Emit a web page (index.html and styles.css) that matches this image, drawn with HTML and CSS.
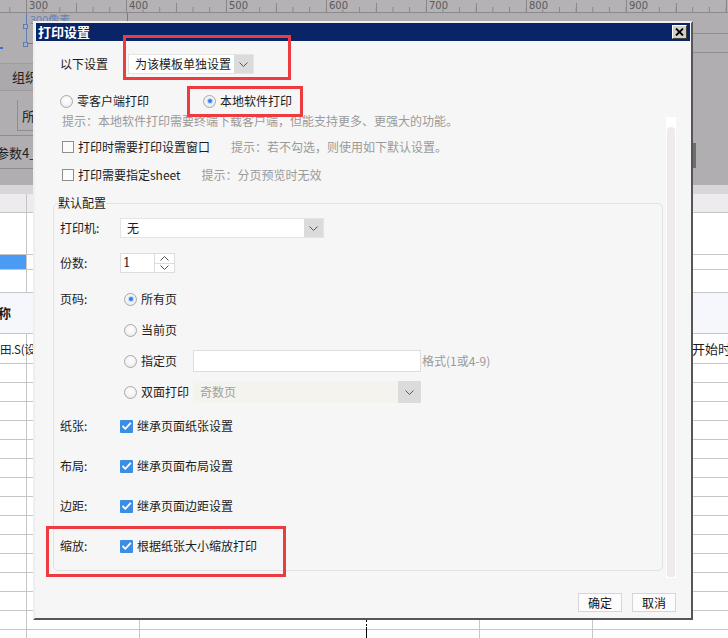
FILE: index.html
```html
<!DOCTYPE html>
<html lang="zh-CN">
<head>
<meta charset="utf-8">
<title>打印设置</title>
<link rel="stylesheet" href="styles.css">
</head>
<body>
<div class="app">
  <div class="ruler">
    <span>300</span><span>400</span><span>500</span><span>600</span><span>700</span><span>800</span><span>900</span>
  </div>
  <div class="toolbar">
    <div class="tb-left">
      <div class="selbox"><span class="selbox-text">300像素</span><i class="handle h1"></i><i class="handle h2"></i></div>
      <i class="blue-tick"></i>
      <div class="btn-org">组织</div>
      <div class="cell-suo">所</div>
      <div class="cell-param">参数4_扌</div>
    </div>
    <div class="tb-right">
      <div class="tbr-a"></div>
      <div class="tbr-b"></div>
      <i class="scroll-mark"></i>
    </div>
  </div>
  <div class="band"></div>
  <div class="thead"></div>
  <div class="tbody">
    <div class="row h42"></div>
    <div class="row h15"><span class="sel-cell"></span></div>
    <div class="row h23"></div>
    <div class="row h41 alt"><span class="t-name">称</span></div>
    <div class="row h30"><span class="t-left">田.S(设</span><span class="t-right">开始时</span></div>
    <div class="row h19"></div><div class="row h19"></div><div class="row h19"></div>
    <div class="row h19"></div><div class="row h19"></div><div class="row h19"></div>
    <div class="row h19"></div><div class="row h19"></div><div class="row h19"></div>
    <div class="row h19"></div><div class="row h19"></div><div class="row h19"></div>
    <div class="row h19"></div><div class="row h19"></div><div class="row h19"></div>
  </div>
  <i class="cursor"></i>

  <div class="dialog">
    <div class="titlebar">
      <span class="title">打印设置</span>
      <button class="close" type="button"><svg width="9" height="8" viewBox="0 0 9 8"><path d="M1 0.5 L8 7.5 M8 0.5 L1 7.5" stroke="#000" stroke-width="1.8" fill="none"/></svg></button>
    </div>
    <div class="dbody">
      <div class="main">
        <div class="content">
          <div class="row-set">
            <span class="lbl-set">以下设置</span>
            <div class="select sel-mode"><span class="sel-text">为该模板单独设置</span><span class="arrow"><svg width="9" height="5" viewBox="0 0 9 5"><polyline points="0.5,0.5 4.5,4.5 8.5,0.5" fill="none" stroke="#555" stroke-width="1"/></svg></span></div>
          </div>
          <div class="row-radio">
            <span class="opt opt1"><i class="radio"></i><span class="opt-text">零客户端打印</span></span>
            <span class="opt"><i class="radio on"></i><span class="opt-text">本地软件打印</span></span>
          </div>
          <div class="hint hint-main">提示：本地软件打印需要终端下载客户端，但能支持更多、更强大的功能。</div>
          <div class="row-check">
            <i class="check"></i><span class="chk-text">打印时需要打印设置窗口</span><span class="hint hint-side">提示：若不勾选，则使用如下默认设置。</span>
          </div>
          <div class="row-check">
            <i class="check"></i><span class="chk-text">打印需要指定sheet</span><span class="hint hint-side">提示：分页预览时无效</span>
          </div>
          <fieldset class="defaults">
            <legend>默认配置</legend>
            <div class="frow f-printer">
              <span class="flbl">打印机:</span>
              <div class="select sel-printer"><span class="sel-text">无</span><span class="arrow"><svg width="9" height="5" viewBox="0 0 9 5"><polyline points="0.5,0.5 4.5,4.5 8.5,0.5" fill="none" stroke="#555" stroke-width="1"/></svg></span></div>
            </div>
            <div class="frow f-copies">
              <span class="flbl">份数:</span>
              <div class="spin">
                <div class="spin-input">1</div>
                <div class="spin-btns">
                  <span><svg width="9" height="5" viewBox="0 0 9 5"><polyline points="0.5,4.5 4.5,0.5 8.5,4.5" fill="none" stroke="#555" stroke-width="1"/></svg></span>
                  <span><svg width="9" height="5" viewBox="0 0 9 5"><polyline points="0.5,0.5 4.5,4.5 8.5,0.5" fill="none" stroke="#555" stroke-width="1"/></svg></span>
                </div>
              </div>
            </div>
            <div class="frow f-all">
              <span class="flbl">页码:</span>
              <i class="radio on r-in"></i><span class="opt-text">所有页</span>
            </div>
            <div class="frow f-cur">
              <span class="flbl"></span>
              <i class="radio r-in"></i><span class="opt-text">当前页</span>
            </div>
            <div class="frow tall f-spec">
              <span class="flbl"></span>
              <span class="ropt"><i class="radio r-in"></i><span class="opt-text">指定页</span></span>
              <div class="text-input"></div>
              <span class="hint fmt">格式(1或4-9)</span>
            </div>
            <div class="frow tall f-dup">
              <span class="flbl"></span>
              <span class="ropt"><i class="radio r-in"></i><span class="opt-text">双面打印</span></span>
              <div class="select sel-dup"><span class="sel-text">奇数页</span><span class="arrow"><svg width="9" height="5" viewBox="0 0 9 5"><polyline points="0.5,0.5 4.5,4.5 8.5,0.5" fill="none" stroke="#555" stroke-width="1"/></svg></span></div>
            </div>
            <div class="frow f-paper">
              <span class="flbl">纸张:</span>
              <i class="check on"><svg width="11" height="10" viewBox="0 0 11 10"><polyline points="1.5,5 4.3,7.8 9.8,1.8" fill="none" stroke="#fff" stroke-width="1.8"/></svg></i><span class="chk-text">继承页面纸张设置</span>
            </div>
            <div class="frow f-next">
              <span class="flbl">布局:</span>
              <i class="check on"><svg width="11" height="10" viewBox="0 0 11 10"><polyline points="1.5,5 4.3,7.8 9.8,1.8" fill="none" stroke="#fff" stroke-width="1.8"/></svg></i><span class="chk-text">继承页面布局设置</span>
            </div>
            <div class="frow f-next">
              <span class="flbl">边距:</span>
              <i class="check on"><svg width="11" height="10" viewBox="0 0 11 10"><polyline points="1.5,5 4.3,7.8 9.8,1.8" fill="none" stroke="#fff" stroke-width="1.8"/></svg></i><span class="chk-text">继承页面边距设置</span>
            </div>
            <div class="frow f-next">
              <span class="flbl">缩放:</span>
              <i class="check on"><svg width="11" height="10" viewBox="0 0 11 10"><polyline points="1.5,5 4.3,7.8 9.8,1.8" fill="none" stroke="#fff" stroke-width="1.8"/></svg></i><span class="chk-text">根据纸张大小缩放打印</span>
            </div>
          </fieldset>
        </div>
        <div class="scrollbar"><div class="thumb"></div></div>
      </div>
      <div class="footer">
        <button class="btn" type="button">确定</button>
        <button class="btn" type="button">取消</button>
      </div>
    </div>
  </div>

  <i class="mark mark-a"></i>
  <i class="mark mark-b"></i>
  <i class="mark mark-c"></i>
</div>
</body>
</html>
```

FILE: styles.css
```css
* { box-sizing: border-box; }
html, body { margin: 0; padding: 0; }
body {
  width: 728px;
  height: 638px;
  overflow: hidden;
  font-family: "Noto Sans CJK SC", "Noto Sans", sans-serif;
  font-size: 12px;
  color: #1c1c1c;
  background: #fff;
}
i { font-style: normal; }

.app {
  position: relative;
  width: 728px;
  height: 638px;
  overflow: hidden;
  background: #fff;
}

/* ---------- background application ---------- */
.ruler {
  height: 13px;
  display: flex;
  padding-left: 29px;
  border-bottom: 1px solid #8c8a8c;
  background:
    linear-gradient(to right, #8a888a 1px, transparent 1px) 26px 0 / 100px 100% repeat-x,
    linear-gradient(to right, #8a888a 1px, transparent 1px) 76px 100% / 100px 9px repeat-x,
    linear-gradient(to right, #8a888a 1px, transparent 1px) 9.33px 100% / 16.667px 5px repeat-x,
    #b4b2b4;
}
.ruler span {
  flex: none;
  width: 100px;
  font: 10px/11px "DejaVu Sans", sans-serif;
  color: #5b5b5b;
}

.toolbar {
  height: 172px;
  display: flex;
  background: #b0aeb0;
}
.tb-left { width: 200px; flex: none; }
.tb-right { flex: 1; }

.selbox {
  position: relative;
  margin-left: 26px;
  width: 102px;
  height: 31px;
  border: 1px solid #5b7fbd;
  border-top: none;
}
.selbox-text {
  display: block;
  padding-left: 3px;
  font-size: 11px;
  line-height: 13px;
  color: #6682b4;
}
.handle {
  position: absolute;
  left: -4px;
  width: 5px;
  height: 5px;
  border: 1px solid #5b7fbd;
  background: #b0aeb0;
}
.h1 { top: 11px; }
.h2 { top: 29px; }
.blue-tick {
  display: block;
  width: 3px;
  height: 2px;
  margin-top: 3px;
  background: #3d74c9;
}
.btn-org {
  margin-top: 14px;
  height: 28px;
  padding-left: 12px;
  border-top: 1px solid #9d9b9d;
  border-bottom: 1px solid #9d9b9d;
  background: #aba9ab;
  font-size: 13px;
  line-height: 26px;
  color: #222;
}
.cell-suo {
  margin-top: 9px;
  margin-left: 17px;
  height: 31px;
  padding-left: 4px;
  border-left: 1px solid #8f8d8f;
  border-bottom: 1px solid #8f8d8f;
  font-size: 13px;
  line-height: 32px;
  color: #222;
}
.cell-param {
  margin-top: 4px;
  height: 34px;
  border-top: 1px solid #8f8d8f;
  border-bottom: 1px solid #8f8d8f;
  text-indent: -4px;
  font-size: 13px;
  line-height: 34px;
  color: #222;
  white-space: nowrap;
}
.tbr-a { height: 21px; border-bottom: 1px solid #8f8d8f; }
.tbr-b { height: 19px; border-bottom: 1px solid #8f8d8f; }
.scroll-mark {
  display: block;
  width: 3px;
  height: 25px;
  margin: 90px 0 0 493px;
  background: #6d6d6d;
}

.band { height: 9px; background: #d8d6d8; }
.thead {
  height: 19px;
  border-bottom: 1px solid #c4c4c4;
  background: linear-gradient(#c4c4c4, #c4c4c4) 26px 0 / 1px 100% no-repeat, #eeebee;
}

.row {
  display: flex;
  border-bottom: 1px solid #c6c6c6;
  background:
    linear-gradient(#c6c6c6, #c6c6c6) 26px 0 / 1px 100% no-repeat,
    linear-gradient(#c6c6c6, #c6c6c6) 139px 0 / 1px 100% no-repeat,
    linear-gradient(#c6c6c6, #c6c6c6) 479px 0 / 1px 100% no-repeat,
    linear-gradient(#c6c6c6, #c6c6c6) 592px 0 / 1px 100% no-repeat,
    #fff;
  font-size: 13px;
  color: #1a1a1a;
  white-space: nowrap;
}
.h42 { height: 42px; }
.h15 { height: 15px; }
.h23 { height: 23px; }
.h41 { height: 41px; }
.h30 { height: 30px; }
.h19 { height: 19px; }
.row.alt { background: #f6f6fd; }
.sel-cell { display: block; width: 26px; height: 100%; background: #4a9bf3; }
.t-name { margin-left: -2px; line-height: 40px; font-weight: 700; }
.t-left { flex: none; width: 692px; line-height: 30px; font-size: 11.5px; letter-spacing: -0.3px; }
.t-right { flex: none; line-height: 30px; }

.cursor {
  position: absolute;
  left: 366px;
  top: 620px;
  width: 1px;
  height: 18px;
  background: linear-gradient(to bottom, #000 0 2px, transparent 2px 4px, #000 4px 6px, transparent 6px 7px, #000 7px);
}

/* ---------- dialog ---------- */
.dialog {
  position: absolute;
  left: 33px;
  top: 21px;
  width: 660px;
  height: 599px;
  display: flex;
  flex-direction: column;
  padding: 0 1px 1px 1px;
  border: 2px solid;
  border-color: #efefef #565656 #565656 #efefef;
  background: #f6f6f6;
  color: #1c1c1c;
}
.titlebar {
  flex: none;
  height: 18px;
  display: flex;
  align-items: center;
  justify-content: space-between;
  padding: 0 3px 0 2px;
  background: #0a2468;
}
.title {
  color: #fff;
  font-size: 13px;
  font-weight: 700;
  line-height: 18px;
}
.close {
  width: 15px;
  height: 14px;
  margin: 0;
  padding: 0;
  display: flex;
  align-items: center;
  justify-content: center;
  border: 1px solid;
  border-color: #fff #404040 #404040 #fff;
  background: #d4d0c8;
}
.dbody {
  flex: 1;
  display: flex;
  flex-direction: column;
  min-height: 0;
}
.main {
  flex: 1;
  display: flex;
  min-height: 0;
}
.content {
  flex: none;
  width: 630px;
  padding: 13px 0 0 24px;
}
.scrollbar {
  flex: none;
  width: 10px;
  height: 461px;
  margin-top: 76px;
  padding: 10px 1px 1px;
  background: #fff;
}
.thumb {
  height: 100%;
  border-radius: 4px 4px 2px 2px;
  background: #eeeaee;
}
.footer {
  flex: none;
  height: 19px;
  margin-bottom: 5px;
  padding-right: 14px;
  display: flex;
  justify-content: flex-end;
  gap: 10px;
}
.btn {
  width: 44px;
  height: 19px;
  margin: 0;
  padding: 0;
  border: 1px solid #d6d6d6;
  background: #fcfcfc;
  font-family: "Noto Sans CJK SC", sans-serif;
  font-size: 12px;
  line-height: 17px;
  color: #111;
}

/* generic controls */
.select {
  display: flex;
  height: 20px;
  border: 1px solid #e4e4e4;
  background: #fff;
}
.sel-text {
  flex: 1;
  padding-left: 6px;
  line-height: 18px;
  white-space: nowrap;
}
.arrow {
  flex: none;
  width: 19px;
  display: flex;
  align-items: center;
  justify-content: center;
  background: #dcdbdc;
}
.radio {
  position: relative;
  flex: none;
  width: 13px;
  height: 13px;
  border-radius: 50%;
  border: 1px solid #a9a9a9;
  background: radial-gradient(circle at 50% 40%, #fff 0, #f3f3f3 55%, #dcdcdc 100%);
}
.radio.on::after {
  content: "";
  position: absolute;
  left: 3.5px;
  top: 3.5px;
  width: 4px;
  height: 4px;
  border-radius: 50%;
  background: #2f7ff5;
  box-shadow: 0 0 1px 1px rgba(47, 127, 245, 0.3);
}
.opt-text { margin-left: 4px; line-height: 20px; white-space: nowrap; }
.check {
  flex: none;
  width: 12px;
  height: 12px;
  border: 1px solid #8e8e8e;
  background: #fbfbfb;
}
.check.on {
  width: 13px;
  height: 13px;
  border: none;
  border-radius: 1px;
  background: #3b8ee6;
  display: flex;
  align-items: center;
  justify-content: center;
}
.chk-text { margin-left: 4px; line-height: 20px; white-space: nowrap; }
.hint { color: #9a9a9a; white-space: nowrap; }

/* top part */
.row-set {
  display: flex;
  align-items: center;
  height: 20px;
}
.lbl-set { flex: none; width: 68px; line-height: 20px; }
.sel-mode { width: 126px; }
.row-radio {
  display: flex;
  align-items: center;
  height: 20px;
  margin-top: 17px;
}
.opt { display: flex; align-items: center; }
.opt1 { width: 143px; flex: none; }
.hint-main {
  margin-top: 2px;
  padding-left: 2px;
  height: 16px;
  line-height: 16px;
}
.row-check {
  display: flex;
  align-items: center;
  height: 20px;
  margin-top: 8px;
  padding-left: 2px;
}
.hint-side { margin-left: 21px; line-height: 20px; }

/* default config group */
.defaults {
  width: 610px;
  margin: 10px 0 0 -7px;
  padding: 0 0 14px 6px;
  border: 1px solid #e2e2e2;
  border-radius: 5px;
  min-inline-size: 0;
}
.defaults legend {
  padding: 0;
  margin-left: -2px;
  line-height: 16px;
  font-size: 12px;
}
.frow {
  display: flex;
  align-items: center;
  height: 20px;
}
.frow.tall { height: 22px; }
.flbl { flex: none; width: 60px; line-height: 20px; white-space: nowrap; }
.f-printer { margin-top: 7px; }
.sel-printer { width: 204px; }
.f-copies { margin-top: 15px; }
.spin { display: flex; height: 20px; }
.spin-input {
  width: 34px;
  height: 20px;
  padding-left: 2px;
  border: 1px solid #dcdcdc;
  border-right: none;
  background: #fff;
  font: 12px/18px "DejaVu Serif", serif;
}
.spin-btns {
  width: 21px;
  height: 20px;
  display: flex;
  flex-direction: column;
  border: 1px solid #dcdcdc;
  background: #fff;
}
.spin-btns span {
  flex: 1;
  display: flex;
  align-items: center;
  justify-content: center;
}
.spin-btns span:first-child { border-bottom: 1px solid #dcdcdc; }
.r-in { margin-left: 4px; }
.f-all { margin-top: 16px; }
.f-cur { margin-top: 11px; }
.f-spec { margin-top: 10px; }
.ropt { flex: none; width: 73px; display: flex; align-items: center; }
.text-input {
  width: 228px;
  height: 22px;
  border: 1px solid #dedede;
  background: #fff;
}
.fmt { margin-left: 1px; line-height: 20px; }
.f-dup { margin-top: 9px; }
.sel-dup {
  width: 228px;
  height: 22px;
  border: none;
  background: #f4f3ee;
}
.sel-dup .sel-text { color: #a0a0a0; padding-left: 7px; line-height: 22px; }
.sel-dup .arrow { width: 23px; }
.f-paper { margin-top: 13px; }
.f-next { margin-top: 20px; }

/* annotation boxes */
.mark {
  position: absolute;
  display: block;
  border: 3px solid #ee3b3f;
}
.mark-a { left: 123px; top: 35px; width: 168px; height: 45px; }
.mark-b { left: 187px; top: 86px; width: 116px; height: 31px; }
.mark-c { left: 46px; top: 526px; width: 240px; height: 51px; }
```
